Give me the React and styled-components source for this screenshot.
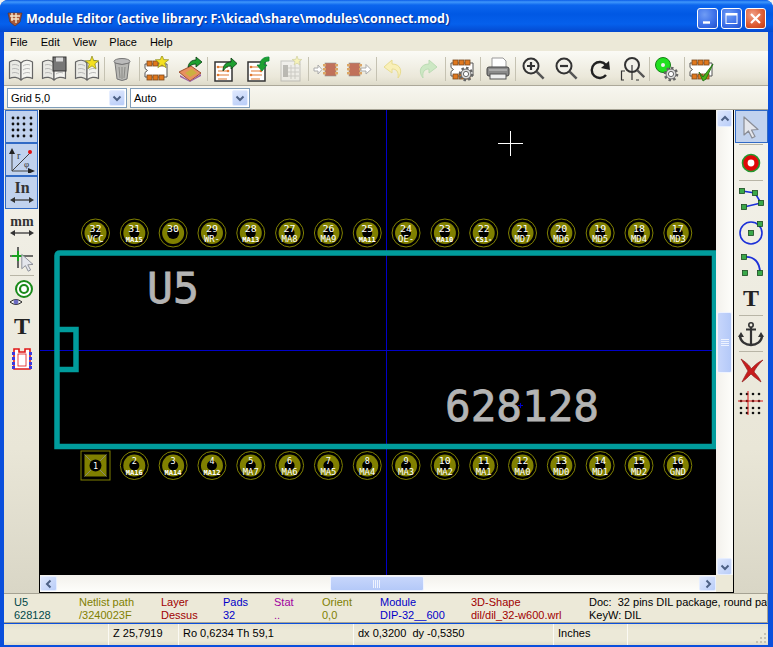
import styled, { createGlobalStyle } from 'styled-components';

const GlobalStyle = createGlobalStyle`
  html, body {
    margin: 0;
    padding: 0;
    background: #f1f1f1;
    overflow: hidden;
  }
`;

const UI_FONT = '"Liberation Sans", "Noto Sans", sans-serif';
const MONO = '"DejaVu Sans Mono", "Liberation Mono", monospace';

const Frame = styled.div`
  width: 773px;
  height: 647px;
  box-sizing: border-box;
  display: flex;
  flex-direction: column;
  background: #0a4fdc;
  border-radius: 8px 8px 0 0;
  padding: 0 5px 2px 4px;
  font: 11px ${UI_FONT};
  color: #000;
`;

const TitleBar = styled.div`
  height: 32px;
  flex: none;
  margin: 0 -5px 0 -4px;
  padding: 5px 7px 0 7px;
  box-sizing: border-box;
  display: flex;
  align-items: center;
  gap: 3px;
  border-radius: 8px 8px 0 0;
  background: linear-gradient(#0a5ce8 0, #3f97fb 2px, #0c66ee 5px, #0058e4 14px, #0560ec 24px, #0449cf 32px);
`;

const TitleText = styled.div`
  flex: 1;
  color: #fff;
  font: bold 12.5px "Open Sans", sans-serif;
  white-space: nowrap;
  text-shadow: 1px 1px 1px #0a2a90;
`;

const WinButton = styled.div`
  width: 19px;
  height: 19px;
  border: 1px solid #fff;
  border-radius: 3px;
  display: flex;
  align-items: center;
  justify-content: center;
  background: ${(p) =>
    p.$close
      ? 'radial-gradient(circle at 35% 30%, #f0a088, #dd5a30 60%, #c23a14)'
      : 'radial-gradient(circle at 35% 30%, #6f9cf5, #3a6ee8 60%, #2350c8)'};
`;

const MenuBar = styled.div`
  height: 19px;
  flex: none;
  display: flex;
  align-items: center;
  gap: 13px;
  padding-left: 6px;
  background: #ece9d8;
  border-bottom: 1px solid #fbfaf5;
`;

const MainToolbar = styled.div`
  height: 33px;
  flex: none;
  display: flex;
  align-items: center;
  padding-left: 0.5px;
  background: linear-gradient(#fafaf5, #ebe8da 75%, #dedbca);
  border-bottom: 1px solid #aca899;
`;

const ToolSlot = styled.div`
  width: 33px;
  height: 28px;
  flex: none;
  display: flex;
  align-items: center;
  justify-content: center;
`;

const ToolSep = styled.div`
  width: 1px;
  height: 24px;
  flex: none;
  margin: 0 0.55px;
  background: #c5c2b2;
`;

const AuxToolbar = styled.div`
  height: 23px;
  flex: none;
  display: flex;
  align-items: center;
  gap: 3px;
  padding-left: 3px;
  background: linear-gradient(#f7f6ef, #efede1);
  border-bottom: 1px solid #a8a596;
`;

const Combo = styled.div`
  width: 120px;
  height: 20px;
  box-sizing: border-box;
  border: 1px solid #7f9db9;
  background: #fff;
  display: flex;
  align-items: center;
  padding-left: 3px;
`;

const ComboLabel = styled.span`
  flex: 1;
`;

const ArrowButton = styled.div`
  width: ${(p) => p.$w || 16}px;
  height: ${(p) => p.$h || 16}px;
  flex: none;
  box-sizing: border-box;
  margin-right: ${(p) => p.$mr || 0}px;
  border: 1px solid #e6eeff;
  border-radius: 2px;
  background: linear-gradient(${(p) => p.$dir || 135}deg, #dfe8fd, #b9cdf8);
  display: flex;
  align-items: center;
  justify-content: center;
`;

const Workspace = styled.div`
  flex: 1;
  min-height: 0;
  display: flex;
`;

const SideBar = styled.div`
  width: ${(p) => p.$w}px;
  flex: none;
  box-sizing: border-box;
  display: flex;
  flex-direction: column;
  align-items: center;
  background: linear-gradient(#f4f3ec 0, #e9e6d7 70%, #d9d6c6);
`;

const SideTool = styled.div`
  width: 33px;
  height: 33px;
  flex: none;
  box-sizing: border-box;
  display: flex;
  align-items: center;
  justify-content: center;
  border: 1px solid ${(p) => (p.$active ? '#316ac5' : 'transparent')};
  background: ${(p) => (p.$active ? '#c1d2ee' : 'transparent')};
`;

const SideSep = styled.div`
  width: 24px;
  height: 1px;
  flex: none;
  margin: ${(p) => p.$m || '1px 0'};
  background: #b8b5a6;
`;

const CanvasColumn = styled.div`
  flex: 1;
  min-width: 0;
  display: flex;
  flex-direction: column;
  border: solid #000;
  border-width: 0 1px 1px 1px;
`;

const CanvasRow = styled.div`
  flex: 1;
  min-height: 0;
  display: flex;
`;

const Canvas = styled.svg`
  flex: 1;
  min-width: 0;
  display: block;
  background: #000;
`;

const VScroll = styled.div`
  width: 17px;
  flex: none;
  display: flex;
  flex-direction: column;
  align-items: center;
  background: linear-gradient(90deg, #f3f1ec, #fefefb);
`;

const HScrollRow = styled.div`
  height: 17px;
  flex: none;
  display: flex;
  background: #ece9d8;
`;

const HScroll = styled.div`
  flex: 1;
  display: flex;
  align-items: center;
  background: linear-gradient(#f3f1ec, #fefefb);
`;

const VThumb = styled.div`
  width: 15px;
  height: 61px;
  box-sizing: border-box;
  margin-top: 185px;
  border: 1px solid #eef3ff;
  border-radius: 2px;
  background: linear-gradient(90deg, #c7d6fb, #b4c9f8);
  display: flex;
  align-items: center;
  justify-content: center;
`;

const HThumb = styled.div`
  width: 94px;
  height: 15px;
  box-sizing: border-box;
  margin-left: 273px;
  border: 1px solid #eef3ff;
  border-radius: 2px;
  background: linear-gradient(#c7d6fb, #b4c9f8);
  display: flex;
  align-items: center;
  justify-content: center;
`;

const ScrollGap = styled.div`
  flex: 1;
`;

const ScrollCorner = styled.div`
  width: 17px;
  flex: none;
`;

const MsgPanel = styled.div`
  height: 30px;
  flex: none;
  box-sizing: border-box;
  display: flex;
  padding: 2px 0 0 10px;
  background: #ece9d8;
  border: solid #a5a293;
  border-width: 1px 1px 1px 0;
  overflow: hidden;
`;

const MsgCol = styled.div`
  width: ${(p) => p.$w}px;
  flex: none;
  color: ${(p) => p.$color};
  line-height: 13px;
  white-space: pre;
`;

const StatusBar = styled.div`
  height: 21px;
  flex: none;
  margin-top: 1px;
  display: flex;
  position: relative;
  background: linear-gradient(#e4e1d0, #ece9d8 30%, #ece9d8 80%, #dedbca);
`;

const StatusCell = styled.div`
  width: ${(p) => p.$w}px;
  flex: none;
  box-sizing: border-box;
  padding: 3px 0 0 4px;
  white-space: pre;
  border-right: 1px solid #fbfaf4;
`;

const Grip = styled.svg`
  position: absolute;
  right: 1px;
  bottom: 1px;
`;

/* little drawings */

const Star = ({ cx, cy, r = 7, fill = '#f5e020', stroke = '#8a8a20' }) => {
  const pts = [];
  for (let i = 0; i < 10; i++) {
    const rad = i % 2 ? r * 0.42 : r;
    const a = -Math.PI / 2 + (i * Math.PI) / 5;
    pts.push(`${(cx + rad * Math.cos(a)).toFixed(1)},${(cy + rad * Math.sin(a)).toFixed(1)}`);
  }
  return <polygon points={pts.join(' ')} fill={fill} stroke={stroke} strokeWidth="0.7" />;
};

const Gear = ({ cx, cy, r = 6 }) => (
  <g>
    <circle cx={cx} cy={cy} r={r} fill="none" stroke="#666" strokeWidth="2.6" strokeDasharray="2.4 2.2" />
    <circle cx={cx} cy={cy} r={r - 1} fill="#ddd" stroke="#666" strokeWidth="1" />
    <circle cx={cx} cy={cy} r={r - 3.4} fill="#fff" stroke="#666" strokeWidth="1" />
  </g>
);

const Book = () => (
  <g stroke="#666" strokeWidth="1.2" strokeLinejoin="round">
    <path d="M1.5 6 C5 3.5 10 3.5 13 7 V24 C10 21 5 20.5 1.5 22.5 Z" fill="#e9e9e4" />
    <path d="M24.5 6 C21 3.5 16 3.5 13 7 V24 C16 21 21 20.5 24.5 22.5 Z" fill="#f4f4f0" />
    <path d="M4 9 C6.5 8 9 8.5 11 10 M4 13 C6.5 12 9 12.5 11 14 M4 17 C6.5 16 9 16.5 11 18 M22 9 C19.5 8 17 8.5 15 10 M22 13 C19.5 12 17 12.5 15 14 M22 17 C19.5 16 17 16.5 15 18" fill="none" stroke="#aaa" strokeWidth="0.8" />
  </g>
);

const Chip = ({ x = 0, y = 0 }) => (
  <g transform={`translate(${x} ${y})`}>
    <path d="M1 6 H23 V19 H1 V14.5 L3.5 12.5 L1 10.5 Z" fill="#fff" stroke="#555" strokeWidth="1" />
    {[3, 9, 15].map((p) => (
      <g key={p}>
        <rect x={p} y="3" width="5" height="5" fill="#e0781e" stroke="#7a4a20" strokeWidth="0.8" />
        <rect x={p} y="17" width="5" height="5" fill="#e0781e" stroke="#7a4a20" strokeWidth="0.8" />
      </g>
    ))}
  </g>
);

const SmallChip = ({ x }) => (
  <g transform={`translate(${x} 0)`}>
    <rect x="0" y="7" width="11" height="13" fill="#b95c44" stroke="#888" strokeWidth="0.6" />
    {[8, 12, 16].map((y) => (
      <g key={y}>
        <rect x={-2} y={y} width="3" height="2.4" fill="#d99a50" />
        <rect x={10} y={y} width="3" height="2.4" fill="#d99a50" />
      </g>
    ))}
  </g>
);

const Svg = ({ w = 26, h = 26, children, ...rest }) => (
  <svg width={w} height={h} viewBox={`0 0 ${w} ${h}`} {...rest}>
    {children}
  </svg>
);

const DocArrow = ({ down }) => (
  <Svg>
    <rect x="3" y="6" width="17" height="19" fill="#fff" stroke="#333" strokeWidth="1.5" />
    <path d="M6 11 H16 M6 15 H17 M6 19 H17 M6 23 H15" stroke="#e07a30" strokeWidth="1.2" />
    <circle cx="6" cy="11" r="1.3" fill="#e07a30" />
    <circle cx="16" cy="15" r="1.3" fill="#e07a30" />
    <circle cx="6" cy="19" r="1.3" fill="#e07a30" />
    {down ? (
      <path d="M24 1 C18 1 15 4 15 9 H12 L17 15 L22 9 H19 C19 6 21 5 24 5 Z" fill="#1ea030" stroke="#083" strokeWidth="0.8" />
    ) : (
      <path d="M11 15 C11 9 14 6 19 6 V2 L25 7.5 L19 13 V10 C15 10 13 12 11 15 Z" fill="#1ea030" stroke="#0a3a10" strokeWidth="0.8" />
    )}
  </Svg>
);

const Lens = ({ cx = 11, cy = 10, r = 7.5, children }) => (
  <g>
    <circle cx={cx} cy={cy} r={r} fill="#f2f1ea" stroke="#333" strokeWidth="2" />
    <path d={`M${cx + r * 0.75} ${cy + r * 0.75} L${cx + r * 0.75 + 7} ${cy + r * 0.75 + 7}`} stroke="#555" strokeWidth="2.4" />
    {children}
  </g>
);

const GreyArrow = () => (
  <path d="M6 3 L6 21 L10.5 17 L14 24 L17 22.5 L13.5 16 L20 15.5 Z" fill="#e4e6ec" stroke="#8a8d96" strokeWidth="1.2" strokeLinejoin="round" />
);

const BoldT = () => (
  <text x="13" y="21" textAnchor="middle" fontFamily="'Liberation Serif', serif" fontWeight="bold" fontSize="24" fill="#222">
    T
  </text>
);

const Handle = ({ x, y }) => <rect x={x - 2.5} y={y - 2.5} width="5" height="5" fill="#3aa84a" stroke="#1a4a20" strokeWidth="0.8" />;

const mainTools = [
  <Svg key="a"><Book /></Svg>,
  <Svg key="b"><Book /><rect x="12" y="1" width="13" height="14" fill="#777" stroke="#333" /><rect x="15" y="1.5" width="7" height="4" fill="#ddd" /></Svg>,
  <Svg key="c"><Book /><Star cx={18} cy={7} r={7} /></Svg>,
  'sep',
  <Svg key="d"><ellipse cx="13" cy="5.5" rx="8" ry="3" fill="#bbb" stroke="#777" /><path d="M6 7 L8 23 Q13 26 18 23 L20 7 Q13 10 6 7 Z" fill="#b8b8b4" stroke="#777" /><path d="M10 11 L11 22 M13 11 V23 M16 11 L15 22" stroke="#8a8a86" /></Svg>,
  'sep',
  <Svg key="e"><Chip x={0} y={2} /><Star cx={18} cy={6} r={7} /></Svg>,
  <Svg key="f"><path d="M2 16 L14 10 L24 17 L13 25 Z" fill="#e89060" stroke="#a05030" /><path d="M3 19 L13 25 L24 18 L24 20 L13 26 L3 21 Z" fill="#9a60a0" /><path d="M8 17 L15 13 L20 17 L13 21 Z" fill="#cbb040" /><path d="M11 11 C12 6 15 4 19 4 V1 L25 6 L19 11 V8 C16 8 14 9 11 11 Z" fill="#1ea030" stroke="#0a3a10" strokeWidth="0.8" /></Svg>,
  'sep',
  <DocArrow key="g" />,
  <DocArrow key="h" down />,
  <Svg key="i"><g opacity="0.5"><rect x="3" y="5" width="19" height="20" fill="#eee" stroke="#999" /><rect x="5" y="9" width="5" height="12" fill="#888" /><path d="M10 12 H21 M10 16 H21 M10 20 H21 M13 9 V23 M17 9 V23" stroke="#aaa" /></g><Star cx={19} cy={5} r={5} fill="#f7f3b8" stroke="#d0d0a0" /></Svg>,
  'sep',
  <Svg key="j"><path d="M1 12 H5 V9 L9 13.5 L5 18 V15 H1 Z" fill="#fff" stroke="#aaa" /><g opacity="0.85"><SmallChip x={12} /></g></Svg>,
  <Svg key="k"><g opacity="0.85"><SmallChip x={3} /></g><path d="M15 12 H20 V8.5 L25 13.5 L20 18 V15 H15 Z" fill="#fff" stroke="#aaa" /></Svg>,
  'sep',
  <Svg key="l"><path d="M11 4 L3 11 L11 17 V13 C15 13 18 15 17 22 C22 16 20 8 11 8 Z" fill="#f9f0b8" stroke="#e8dc90" /></Svg>,
  <Svg key="m"><path d="M15 4 L23 11 L15 17 V13 C11 13 8 15 9 22 C4 16 6 8 15 8 Z" fill="#cde8c4" stroke="#bcdcb4" /></Svg>,
  'sep',
  <Svg key="n"><Chip x={0} y={1} /><Gear cx={16} cy={18} r={6} /></Svg>,
  'sep',
  <Svg key="o"><path d="M7 2 H18 L21 5 V13 H7 Z" fill="#fff" stroke="#999" /><rect x="2" y="11" width="22" height="9" rx="2" fill="#8b8b8b" stroke="#444" /><rect x="5" y="18" width="16" height="5" fill="#eee" stroke="#555" /><path d="M4 14 H22" stroke="#ccc" /></Svg>,
  'sep',
  <Svg key="p"><Lens><path d="M7 10 H15 M11 6 V14" stroke="#333" strokeWidth="2.2" /></Lens></Svg>,
  <Svg key="q"><Lens><path d="M7 10 H15" stroke="#333" strokeWidth="2.2" /></Lens></Svg>,
  <Svg key="r"><path d="M20 9 A8 8 0 1 0 20 19" fill="none" stroke="#222" strokeWidth="2.4" /><path d="M15 12 L24 14 L23 5 Z" fill="#222" /></Svg>,
  <Svg key="s"><Lens cx={13} cy={9} r={7}><path d="M13 9 V24" stroke="#333" strokeWidth="1.2" /></Lens><path d="M6 15 H2.5 V24 H5 M20 24 H17" fill="none" stroke="#333" strokeWidth="1.2" /></Svg>,
  'sep',
  <Svg key="t"><circle cx="9" cy="9" r="7.5" fill="#20e020" stroke="#168016" /><circle cx="9" cy="9" r="2" fill="#eee" /><Gear cx={17} cy={18} r={6} /></Svg>,
  'sep',
  <Svg key="u"><Chip x={0} y={1} /><path d="M10 16 L14 21 L24 8 L17 23 L14 25 Z" fill="#48b018" stroke="#1a6a10" strokeWidth="0.8" /></Svg>,
];

const DotsIcon = () => (
  <Svg>
    {[4, 10, 16, 22].map((y) =>
      [4, 9, 15, 22].map((x) => <circle key={`${x}-${y}`} cx={x} cy={y} r="1.4" fill="#111" />)
    )}
  </Svg>
);

const PolarIcon = () => (
  <Svg>
    <path d="M3 24 L22 24 M3 24 V5 M3 24 L21 6" stroke="#444" strokeWidth="1" fill="none" />
    <path d="M0 7 L3 1 L6 7 Z M19 21 L26 24 L19 27 Z" fill="#222" />
    <circle cx="21" cy="5" r="2" fill="#e01010" />
    <text x="8" y="12" fontFamily="'Liberation Serif', serif" fontSize="10" fill="#333">r</text>
    <text x="15" y="20" fontFamily="'Liberation Serif', serif" fontSize="9" fill="#333">φ</text>
  </Svg>
);

const UnitIcon = ({ label, size = 14 }) => (
  <Svg>
    <text x="13" y="13" textAnchor="middle" fontFamily="'Liberation Serif', serif" fontWeight="bold" fontSize={size} fill="#333">
      {label}
    </text>
    <path d="M4 20 H22" stroke="#444" strokeWidth="1.4" />
    <path d="M1 20 L6 17 V23 Z M25 20 L20 17 V23 Z" fill="#333" />
  </Svg>
);

const CursorIcon = () => (
  <Svg>
    <path d="M1 10 H24 M9 1 V22" stroke="#444" strokeWidth="1.6" />
    <path d="M3 10 H15 M9 5 V15" stroke="#1aa020" strokeWidth="2" />
    <g transform="translate(8 6) scale(0.8)"><GreyArrow /></g>
  </Svg>
);

const EyePadIcon = () => (
  <Svg>
    <circle cx="15" cy="9" r="8" fill="#fff" stroke="#1a8a1a" strokeWidth="2" />
    <circle cx="15" cy="9" r="4" fill="none" stroke="#1a8a1a" strokeWidth="2.2" />
    <path d="M1 22 Q7 17 13 22 Q7 27 1 22 Z" fill="#eee" stroke="#222" strokeWidth="1" />
    <circle cx="7" cy="22" r="2.4" fill="#6a6ac0" />
  </Svg>
);

const RedChipIcon = () => (
  <Svg>
    <path d="M5 3 H10 V6 H16 V3 H21 V23 H5 Z" fill="#fff" stroke="#e01818" strokeWidth="1.6" />
    <rect x="9" y="8" width="8" height="12" fill="none" stroke="#e01818" strokeWidth="0.8" />
    {[6, 11, 16, 20].map((y) => (
      <g key={y}>
        <rect x="3" y={y} width="3" height="3" fill="#3a3ae0" />
        <rect x="20" y={y} width="3" height="3" fill="#3a3ae0" />
      </g>
    ))}
  </Svg>
);

const PadIcon = () => (
  <Svg>
    <circle cx="13" cy="13" r="8.5" fill="#e00808" stroke="#239a30" strokeWidth="1.6" />
    <circle cx="13" cy="13" r="3.4" fill="#fff" />
  </Svg>
);

const PolyIcon = () => (
  <Svg>
    <path d="M4 5 L17 7 L23 17 L6 21" fill="none" stroke="#1c30d8" strokeWidth="1.6" />
    <Handle x={4} y={5} /><Handle x={17} y={7} /><Handle x={23} y={17} /><Handle x={6} y={21} />
  </Svg>
);

const CircleIcon = () => (
  <Svg>
    <circle cx="13" cy="14" r="11" fill="none" stroke="#1c30d8" strokeWidth="1.6" />
    <Handle x={13} y={14} /><Handle x={22} y={5} />
  </Svg>
);

const ArcIcon = () => (
  <Svg>
    <path d="M6 5 C16 4 22 10 22 21" fill="none" stroke="#1c30d8" strokeWidth="1.8" />
    <Handle x={6} y={5} /><Handle x={7} y={21} /><Handle x={22} y={21} />
  </Svg>
);

const AnchorIcon = () => (
  <Svg>
    <circle cx="13" cy="4" r="2.2" fill="none" stroke="#333" strokeWidth="1.6" />
    <path d="M8 8.5 H18 M13 6 V23" stroke="#333" strokeWidth="2.2" />
    <path d="M2 14 C2 21 8 24 13 24 C18 24 24 21 24 14" fill="none" stroke="#333" strokeWidth="2.4" />
    <path d="M0 16 L3 11 L6 16 Z M20 16 L23 11 L26 16 Z" fill="#333" />
  </Svg>
);

const DeleteIcon = () => (
  <Svg>
    <path d="M3 2 C9 6 13 10 13 12 C17 8 20 5 25 3 C20 8 17 12 16 15 C19 18 22 22 23 25 C19 22 15 19 13 17 C10 20 7 23 4 25 C6 21 8 17 10 14 C8 10 5 6 3 2 Z" fill="#c81c1c" stroke="#902020" strokeWidth="0.7" />
  </Svg>
);

const RedGridIcon = () => (
  <Svg>
    {[4, 11, 18, 23].map((y) =>
      [3, 9, 15, 21].map((x) => <circle key={`${x}-${y}`} cx={x} cy={y} r="1.3" fill="#111" />)
    )}
    <path d="M0 11 H25 M10 1 V25" stroke="#d81818" strokeWidth="1" />
  </Svg>
);

const Chevron = ({ dir }) => {
  const paths = {
    up: 'M1.5 6.5 L5 3 L8.5 6.5',
    down: 'M1.5 3.5 L5 7 L8.5 3.5',
    left: 'M6.5 1.5 L3 5 L6.5 8.5',
    right: 'M3.5 1.5 L7 5 L3.5 8.5',
  };
  return (
    <svg width="10" height="10" viewBox="0 0 10 10">
      <path d={paths[dir]} fill="none" stroke="#4d6185" strokeWidth="2" />
    </svg>
  );
};

const GripLines = ({ vertical }) => (
  <svg width="8" height="8" viewBox="0 0 8 8">
    {[1, 3, 5, 7].map((p) =>
      vertical ? (
        <path key={p} d={`M${p - 0.5} 0 V8`} stroke="#eef3ff" />
      ) : (
        <path key={p} d={`M0 ${p - 0.5} H8`} stroke="#eef3ff" />
      )
    )}
  </svg>
);

/* the module itself */

const topPads = ['VCC', 'MA15', '', 'WR-', 'MA13', 'MA8', 'MA9', 'MA11', 'OE-', 'MA10', 'CS1-', 'MD7', 'MD6', 'MD5', 'MD4', 'MD3'];
const bottomPads = ['', 'MA16', 'MA14', 'MA12', 'MA7', 'MA6', 'MA5', 'MA4', 'MA3', 'MA2', 'MA1', 'MA0', 'MD0', 'MD1', 'MD2', 'GND'];
const padX = (i) => 95.5 + i * 38.82;
const OLIVE = '#808000';

const Pad = ({ x, y, num, name, square }) => (
  <g>
    {square ? (
      <g>
        <rect x={x - 14.5} y={y - 14.5} width="29" height="29" fill="none" stroke={OLIVE} />
        <rect x={x - 11} y={y - 11} width="22" height="22" fill={OLIVE} />
        <path d={`M${x - 11} ${y - 11} L${x + 11} ${y + 11} M${x + 11} ${y - 11} L${x - 11} ${y + 11}`} stroke="#8a8a90" strokeWidth="0.8" />
      </g>
    ) : (
      <g>
        <circle cx={x} cy={y} r="14" fill="none" stroke={OLIVE} />
        <circle cx={x} cy={y} r="11" fill={OLIVE} />
      </g>
    )}
    <circle cx={x} cy={y} r={name ? 5 : 6} fill="#000" />
    <text x={x} y={square ? y + 3.5 : y - 1.5} textAnchor="middle" fontFamily={MONO} fontSize="8.5" fill="#fff" textLength={String(num).length > 1 ? 12 : undefined} lengthAdjust="spacingAndGlyphs">
      {num}
    </text>
    {name && (
      <text x={x} y={y + 9} textAnchor="middle" fontFamily={MONO} fontSize={name.length > 3 ? 7 : 9.5} fontWeight={name.length > 3 ? 'bold' : 'normal'} fill="#fff" textLength={name.length > 3 ? 17 : 16} lengthAdjust="spacingAndGlyphs">
        {name}
      </text>
    )}
  </g>
);

const ModuleCanvas = () => (
  <Canvas viewBox="40 110 676 465" preserveAspectRatio="none">
    <path d="M386.5 110 V575 M40 350.5 H716" stroke="#0000c8" strokeWidth="1" />
    <path d="M716 253 H60 Q57 253 57 256 V446.5 H716 M714.5 253 V446.5" fill="none" stroke="#009c9c" strokeWidth="5.5" />
    <path d="M57 329.5 H76 V369.5 H57" fill="none" stroke="#009c9c" strokeWidth="5.5" />
    <path d="M498 143.5 H523 M510.5 131 V156" stroke="#fff" strokeWidth="1" />
    {topPads.map((name, i) => (
      <Pad key={name + i} x={padX(i)} y={233} num={32 - i} name={name} />
    ))}
    {bottomPads.map((name, i) => (
      <Pad key={name + i} x={padX(i)} y={465.5} num={i + 1} name={name} square={i === 0} />
    ))}
    <text x="147" y="303" fontFamily={MONO} fontSize="43" fill="#b4b4b4" stroke="#b4b4b4" strokeWidth="0.8" textLength="52" lengthAdjust="spacingAndGlyphs">U5</text>
    <text x="445" y="421" fontFamily={MONO} fontSize="43" fill="#b4b4b4" stroke="#b4b4b4" strokeWidth="0.8" textLength="154" lengthAdjust="spacingAndGlyphs">628128</text>
    <path d="M518 405.5 H523 M520.5 403 V408" stroke="#0000c8" strokeWidth="1" />
  </Canvas>
);

const msgColumns = [
  { w: 65, color: '#004848', top: 'U5', bottom: '628128' },
  { w: 82, color: '#808000', top: 'Netlist path', bottom: '/3240023F' },
  { w: 62, color: '#a00000', top: 'Layer', bottom: 'Dessus' },
  { w: 51, color: '#0000c8', top: 'Pads', bottom: '32' },
  { w: 48, color: '#a000a0', top: 'Stat', bottom: '..' },
  { w: 58, color: '#808000', top: 'Orient', bottom: '0,0' },
  { w: 91, color: '#0000c8', top: 'Module', bottom: 'DIP-32__600' },
  { w: 118, color: '#a00000', top: '3D-Shape', bottom: 'dil/dil_32-w600.wrl' },
  { w: 190, color: '#000', top: 'Doc:  32 pins DIL package, round pads', bottom: 'KeyW: DIL' },
];

const statusCells = [
  { w: 105, text: '' },
  { w: 70, text: 'Z 25,7919' },
  { w: 175, text: 'Ro 0,6234 Th 59,1' },
  { w: 200, text: 'dx 0,3200  dy -0,5350' },
  { w: 74, text: 'Inches' },
];

const App = () => {
  return (
    <>
      <GlobalStyle />
      <Frame>
        <TitleBar>
          <svg width="16" height="16" viewBox="0 0 16 16">
            <path d="M1 2 L15 2 L13 11 L8 15 L3 11 Z" fill="#a85a3c" stroke="#5a2a18" strokeWidth="0.6" />
            <path d="M3 5 H13 M4 8 H12 M5 2 V10 M9 2 V12" stroke="#f4e4c8" strokeWidth="1.4" />
          </svg>
          <TitleText>Module Editor (active library: F:\kicad\share\modules\connect.mod)</TitleText>
          <WinButton>
            <svg width="11" height="11" viewBox="0 0 11 11"><path d="M1 9.5 H8" stroke="#fff" strokeWidth="2.4" /></svg>
          </WinButton>
          <WinButton>
            <svg width="13" height="13" viewBox="0 0 13 13"><rect x="1" y="1.5" width="11" height="10" fill="none" stroke="#fff" /><path d="M1 2.5 H12" stroke="#fff" strokeWidth="2" /></svg>
          </WinButton>
          <WinButton $close>
            <svg width="13" height="13" viewBox="0 0 13 13"><path d="M2 2 L11 11 M11 2 L2 11" stroke="#fff" strokeWidth="2.2" /></svg>
          </WinButton>
        </TitleBar>

        <MenuBar>
          <span>File</span>
          <span>Edit</span>
          <span>View</span>
          <span>Place</span>
          <span>Help</span>
        </MenuBar>

        <MainToolbar>
          {mainTools.map((tool, i) =>
            tool === 'sep' ? <ToolSep key={i} /> : <ToolSlot key={i}>{tool}</ToolSlot>
          )}
        </MainToolbar>

        <AuxToolbar>
          <Combo>
            <ComboLabel>Grid 5,0</ComboLabel>
            <ArrowButton $dir={160} $mr={1}><Chevron dir="down" /></ArrowButton>
          </Combo>
          <Combo>
            <ComboLabel>Auto</ComboLabel>
            <ArrowButton $dir={160} $mr={1}><Chevron dir="down" /></ArrowButton>
          </Combo>
        </AuxToolbar>

        <Workspace>
          <SideBar $w={35}>
            <SideTool $active><DotsIcon /></SideTool>
            <SideTool $active><PolarIcon /></SideTool>
            <SideTool $active><UnitIcon label="In" size={16} /></SideTool>
            <SideTool><UnitIcon label="mm" /></SideTool>
            <SideTool><CursorIcon /></SideTool>
            <SideSep $m="0" />
            <SideTool><EyePadIcon /></SideTool>
            <SideTool><Svg><BoldT /></Svg></SideTool>
            <SideTool><RedChipIcon /></SideTool>
          </SideBar>

          <CanvasColumn>
            <CanvasRow>
              <ModuleCanvas />
              <VScroll>
                <ArrowButton $w={15} $h={17}><Chevron dir="up" /></ArrowButton>
                <VThumb><GripLines /></VThumb>
                <ScrollGap />
                <ArrowButton $w={15} $h={17}><Chevron dir="down" /></ArrowButton>
              </VScroll>
            </CanvasRow>
            <HScrollRow>
              <HScroll>
                <ArrowButton $w={17} $h={15}><Chevron dir="left" /></ArrowButton>
                <HThumb><GripLines vertical /></HThumb>
                <ScrollGap />
                <ArrowButton $w={17} $h={15}><Chevron dir="right" /></ArrowButton>
              </HScroll>
              <ScrollCorner />
            </HScrollRow>
          </CanvasColumn>

          <SideBar $w={34}>
            <SideTool $active><Svg><GreyArrow /></Svg></SideTool>
            <SideSep />
            <SideTool><PadIcon /></SideTool>
            <SideSep />
            <SideTool><PolyIcon /></SideTool>
            <SideTool><CircleIcon /></SideTool>
            <SideTool><ArcIcon /></SideTool>
            <SideTool><Svg><BoldT /></Svg></SideTool>
            <SideSep />
            <SideTool><AnchorIcon /></SideTool>
            <SideSep />
            <SideTool><DeleteIcon /></SideTool>
            <SideTool><RedGridIcon /></SideTool>
          </SideBar>
        </Workspace>

        <MsgPanel>
          {msgColumns.map((col) => (
            <MsgCol key={col.top} $w={col.w} $color={col.color}>
              {col.top}
              <br />
              {col.bottom}
            </MsgCol>
          ))}
        </MsgPanel>

        <StatusBar>
          {statusCells.map((cell, i) => (
            <StatusCell key={i} $w={cell.w}>{cell.text}</StatusCell>
          ))}
          <Grip width="12" height="12" viewBox="0 0 12 12">
            {[[9, 1], [5, 5], [9, 5], [1, 9], [5, 9], [9, 9]].map(([x, y]) => (
              <rect key={`${x}-${y}`} x={x} y={y} width="2" height="2" fill="#c5c2b2" />
            ))}
          </Grip>
        </StatusBar>
      </Frame>
    </>
  );
};

export default App;
